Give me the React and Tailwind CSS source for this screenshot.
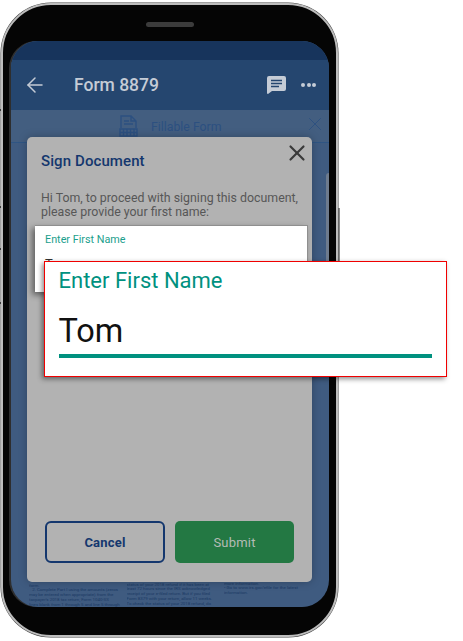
import React from "react";
import { ArrowLeft, X } from "lucide-react";

const docColumns = [
  { top: "mt-[2.600px]", lines: ["form.", "   2. Complete Part I using the amounts (zeros", "may be entered when appropriate) from the", "taxpayer's 2018 tax return, Form 1040-SS", "lines blank from 1 through 5 and line 5 through"] },
  { top: "mt-[1.600px]", lines: ["status of your 2018 refund if it has been at", "least 72 hours since the IRS acknowledged", "receipt of your e-filed return. But if you filed", "Form 8379 with your return, allow 11 weeks.", "To check the status of your 2018 refund, do"] },
  { top: "mt-[0.600px]", lines: ["more information.", "• Go to www.irs.gov/efile for the latest", "information."] },
];

const App = () => {
  return (
    <div className="relative w-[463px] h-[641px] bg-white overflow-hidden font-['Roboto',sans-serif]">
      {/* side button notches */}
      <div className="absolute left-0 top-[109px] w-[2px] h-[2px] bg-[#333]" />
      <div className="absolute left-0 top-[206px] w-[2px] h-[2px] bg-[#333]" />
      <div className="absolute left-0 top-[248px] w-[2px] h-[2px] bg-[#333]" />
      <div className="absolute left-0 top-[302px] w-[2px] h-[2px] bg-[#333]" />
      <div className="absolute left-[338px] top-[208px] w-[2px] h-[84px] bg-[#8a8a8a]" />

      {/* phone body */}
      <div className="absolute left-[1px] top-[3px] w-[337px] h-[634px] rounded-[50px] border-[2px] border-[#bdbdbd] bg-[#050505] shadow-[0_0_0_0.5px_#444] flex flex-col pl-[8px] pr-[7px] pt-[36px] pb-[28px]">
        <div className="absolute left-[143px] top-[17px] w-[48px] h-[5px] rounded-full bg-[#3c3c3c]" />

        {/* screen */}
        <div className="relative flex-1 rounded-[27px] overflow-hidden bg-[#3f5b80] flex flex-col shadow-[-2px_0_0_#2e2e2e]">
          <div className="h-[19px] bg-[#17345c] shrink-0" />
          <div className="h-[50px] bg-[#25466f] shrink-0 flex items-center text-[#c5ccd6] pl-[12px] pr-[13px]">
            <ArrowLeft size={24} strokeWidth={1.5} />
            <span className="ml-[27px] mt-[1px] text-[17.500px] font-medium leading-none">Form 8879</span>
            <svg className="ml-auto" width="19" height="18" viewBox="0 0 19 18" fill="#c5ccd6">
              <path d="M2 0h15a2 2 0 0 1 2 2v11a2 2 0 0 1-2 2H5l-4 3a1 1 0 0 1-1-1V2a2 2 0 0 1 2-2z" />
              <path d="M4 4.500h11M4 7.500h11M4 10.500h8" stroke="#25466f" strokeWidth="1.500" />
            </svg>
            <div className="ml-[15px] flex gap-[1.500px]">
              <span className="w-[4px] h-[4px] rounded-full bg-[#c5ccd6]" />
              <span className="w-[4px] h-[4px] rounded-full bg-[#c5ccd6]" />
              <span className="w-[4px] h-[4px] rounded-full bg-[#c5ccd6]" />
            </div>
          </div>
          <div className="h-[33px] bg-[#435e80] border-b border-[#2f5583] shrink-0 flex items-start pl-[108px] pr-[3px] text-[#2c5080]">
            <svg className="mt-[5px] shrink-0" width="19" height="22" viewBox="0 0 19 22" fill="none" stroke="#2c5080" strokeWidth="1.400">
              <path d="M2 13V1h10l5 5v7M12 1v5h5M5 6h5M5 9h9" />
              <path d="M1 14h17v7H1zM4.500 14v7M8 14v7M11.500 14v7M15 14v7M1 17.500h17" />
            </svg>
            <span className="ml-[13px] mt-[11px] text-[12.300px] leading-[12px]">Fillable Form</span>
            <X className="ml-auto mt-[3px]" size={22} strokeWidth={1} />
          </div>

          {/* edge of the page behind the dialog */}
          <div className="absolute right-0 top-[132px] w-[3px] h-[120px] rounded-tl-[3px] bg-[#6d7b8e]" />

          {/* document peeking out below the dialog */}
          <div className="flex-1 flex items-end pl-[18px] text-[4.400px] leading-[4.800px] text-[#1c3a64] whitespace-pre">
            {docColumns.map((col, i) => (
              <div key={i} className="w-[97.500px] h-[26px] overflow-hidden">
                <div className={col.top}>
                  {col.lines.map((line, j) => (
                    <div key={j}>{line}</div>
                  ))}
                </div>
              </div>
            ))}
          </div>
        </div>
      </div>

      {/* dialog */}
      <div className="absolute left-[27px] top-[137px] w-[285px] h-[445px] rounded-[5px] bg-[#b2b2b2] flex flex-col px-[14px] shadow-[0_0_8px_rgba(0,0,0,0.25)]">
        <div className="flex items-start justify-between mt-[2.500px]">
          <h2 className="mt-[12.500px] text-[15px] leading-[18px] font-medium tracking-[0.1px] text-[#14376e]">Sign Document</h2>
          <X className="-mr-[11.500px] text-[#3a3a3a]" size={26} strokeWidth={2} />
        </div>
        <p className="mt-[20.500px] -mr-[6px] text-[12.360px] leading-[14px] text-[#575757]">
          Hi Tom, to proceed with signing this document, please provide your first name:
        </p>
        <div className="flex-1" />
        <div className="flex gap-[10px] mb-[19px] ml-[4px]">
          <button className="w-[120px] h-[42px] pt-[1px] rounded-[6px] border-[2px] border-[#14376e] text-[13px] font-bold tracking-[0.2px] text-[#14376e]">
            Cancel
          </button>
          <button className="w-[119px] h-[42px] pt-[2px] rounded-[5px] bg-[#237843] text-[13px] tracking-[0.2px] text-[#b5bcb6]">
            Submit
          </button>
        </div>
      </div>

      {/* small input, mostly under the magnifier */}
      <div className="absolute left-[35px] top-[225px] w-[273px] h-[67px] bg-white border-t border-r border-[#8f8f8f] px-[10px] pt-[8px] shadow-[-3px_3px_6px_rgba(0,0,0,0.45)]">
        <div className="text-[10.800px] leading-[12px] text-[#1ba08d]">Enter First Name</div>
        <div className="mt-[10px] text-[13px] leading-[16px] text-[#333]">Tom</div>
      </div>

      {/* magnified input */}
      <div className="absolute left-[44px] top-[261px] w-[403px] h-[116px] bg-white border border-[#f00000] pl-[13.500px] pr-[14.500px] pt-[6px] shadow-[-2px_2px_5px_rgba(0,0,0,0.45)]">
        <div className="text-[22px] leading-[26px] text-[#00917f]">Enter First Name</div>
        <div className="mt-[17px] text-[32.500px] leading-[40px] text-[#111]">Tom</div>
        <div className="mt-[3px] h-[3.500px] bg-[#00917f]" />
      </div>
    </div>
  );
};

export default App;
